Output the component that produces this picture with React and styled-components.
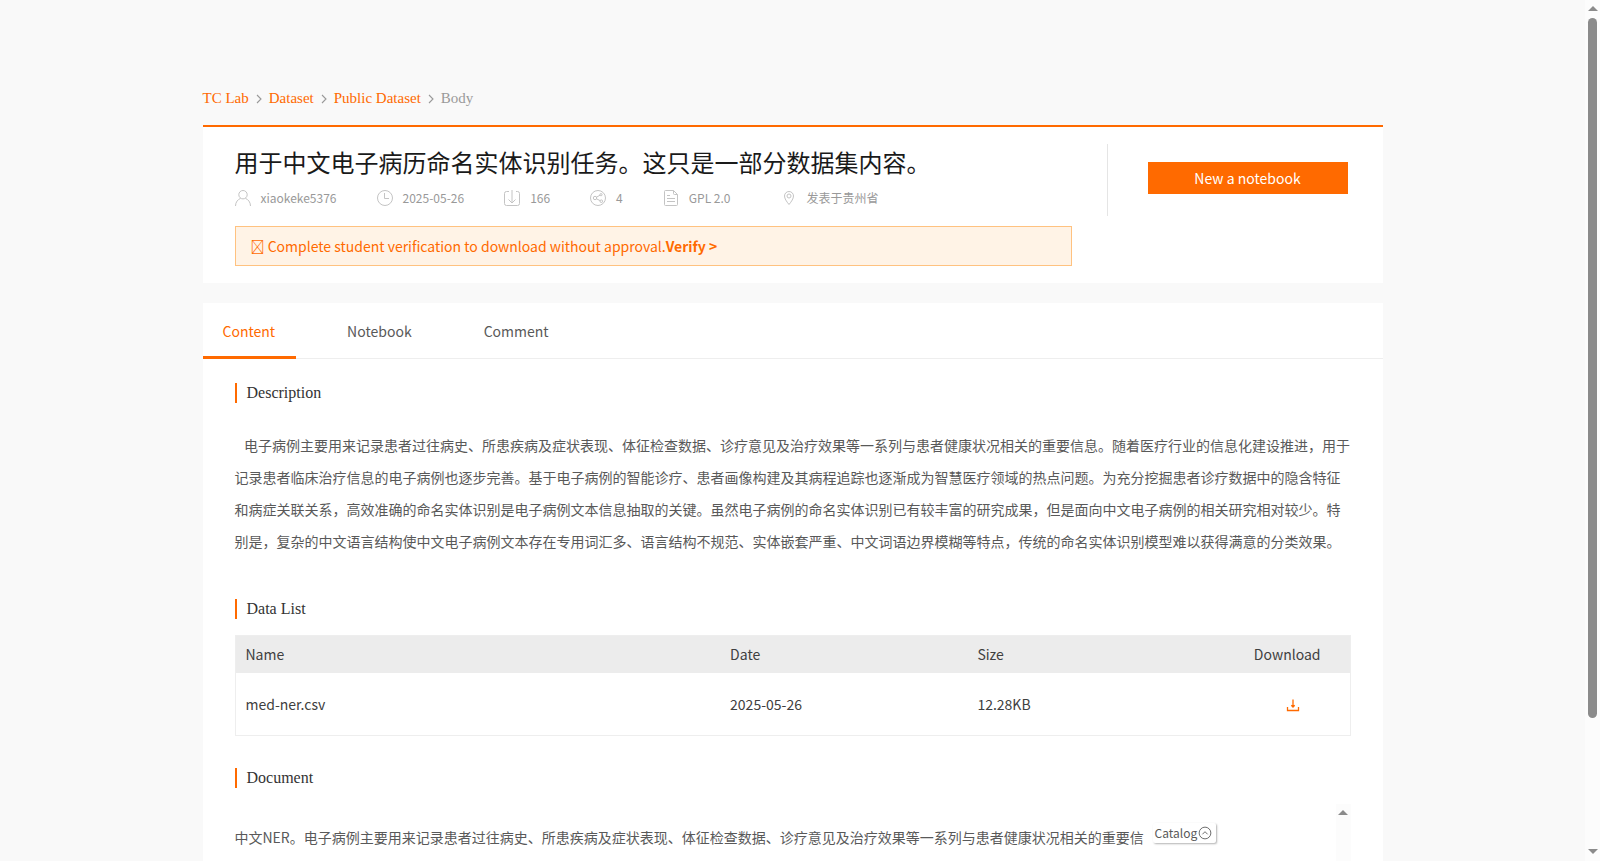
import React, { useState } from 'react';
import styled, { createGlobalStyle, css } from 'styled-components';

const GlobalStyle = createGlobalStyle`
    * {
        box-sizing: border-box;
    }
    body {
        margin: 0;
        background: #f9f9f9;
        color: #404040;
        font-family: "Noto Sans CJK SC", sans-serif;
        font-size: 14px;
    }
    button {
        font-family: inherit;
        cursor: pointer;
    }
    a {
        text-decoration: none;
    }
`

const Shell = styled.div`
    display: flex;
    height: 100vh;
    overflow: hidden;
`
const Page = styled.main`
    flex: 1;
    min-width: 0;
`
const Container = styled.div`
    max-width: 1180px;
    margin: 0 auto;
    padding-top: 84px;
`

const Rail = styled.div`
    display: flex;
    flex-direction: column;
    align-items: center;
    flex: none;
    width: 15px;
    padding: 6px 0 7px;
    background: #fcfcfc;
`
const Arrow = styled.span`
    border: 5px solid transparent;
    border-top-width: ${props => props.$down ? '5px' : '0'};
    border-bottom-width: ${props => props.$down ? '0' : '5px'};
    border-${props => props.$down ? 'top' : 'bottom'}-color: #8b8b8b;
`
const Track = styled.div`
    flex: 1;
    width: 9px;
    margin: 7px 0;
`
const Thumb = styled.div`
    height: 85%;
    border-radius: 5px;
    background: #8b8b8b;
`

const Breadcrumb = styled.nav`
    display: flex;
    align-items: center;
    height: 29px;
    margin-bottom: 12px;
    font-family: "Liberation Serif", serif;
    font-size: 15px;
    color: #999;

    a {
        color: #ff6a00;
    }
    svg {
        margin: 0 7px;
    }
`

const Card = styled.section`
    background: #fff;
`
const HeaderCard = styled(Card)`
    display: flex;
    align-items: flex-start;
    margin-bottom: 20px;
    padding: 17px 35px 17px 32px;
    border-top: 2px solid #ff6a00;
`
const Summary = styled.div`
    flex: 1;
    min-width: 0;
`
const Title = styled.h1`
    margin: 0;
    font-size: 24px;
    font-weight: 400;
    line-height: 36px;
    color: #1a1a1a;
`
const MetaList = styled.ul`
    display: flex;
    gap: 40px;
    margin: 9px 0 19px;
    padding: 0;
    list-style: none;
`
const MetaItem = styled.li`
    display: flex;
    align-items: center;
    gap: 10px;
    font-size: 12px;
    line-height: 18px;
    color: #999;
    margin-left: ${props => props.$spaced ? '10px' : '0'};

    svg {
        flex: none;
        color: #c4c4c4;
    }
`
const Notice = styled.div`
    height: 40px;
    padding: 0 15px;
    border: 1px solid #ffc280;
    background: #fff3e6;
    font-size: 14px;
    line-height: 38px;
    color: #ff6a00;

    a {
        color: inherit;
        font-weight: 700;
    }
`
const Actions = styled.div`
    height: 72px;
    margin-left: 35px;
    padding: 18px 0 0 40px;
    border-left: 1px solid #e5e5e5;
`
const PrimaryButton = styled.button`
    display: block;
    width: 200px;
    height: 32px;
    padding: 0;
    border: 0;
    background: #ff6a00;
    color: #fff;
    font-size: 14px;
`

const TabBar = styled.div`
    display: flex;
    gap: 31px;
    height: 56px;
    border-bottom: 1px solid #eee;
`
const Tab = styled.button`
    height: 56px;
    padding: 3px 21px 0 20px;
    border: 0;
    border-bottom: 3px solid transparent;
    background: none;
    color: #595959;
    font-size: 14px;
    ${props => props.$active && css`
        border-color: #ff6a00;
        color: #ff6a00;
    `}
`
const TabBody = styled.div`
    padding: 24px 32px;
`
const SectionTitle = styled.h2`
    margin: 0 0 16px;
    padding-left: 10px;
    border-left: 2px solid #ff6a00;
    font-family: "Liberation Serif", serif;
    font-size: 16px;
    font-weight: 400;
    line-height: 20px;
    color: #333;
`
const Description = styled.p`
    margin: 0;
    padding: 10px 0 42px;
    line-height: 32px;
    color: #595959;
    white-space: pre-wrap;
`

const FileTable = styled.table`
    width: 100%;
    margin-bottom: 32px;
    border: 1px solid #eee;
    border-spacing: 0;
    table-layout: fixed;
    font-size: 14px;

    th, td {
        padding: 0 10px;
        text-align: left;
        font-weight: 400;
    }
    th {
        height: 37px;
        padding-bottom: 2px;
        background: #ececec;
    }
    td {
        height: 62px;
    }
    th:last-child {
        padding: 0 29px 2px;
        text-align: right;
    }
    td:last-child {
        padding: 0 50px 2px;
        text-align: right;
    }
`
const Col = styled.col`
    width: ${props => props.$width};
`
const IconButton = styled.button`
    padding: 0;
    border: 0;
    background: none;
    color: #ff6a00;
    line-height: 0;
    vertical-align: middle;
`

const DocumentArea = styled.div`
    display: flex;
    height: 600px;
    overflow: hidden;
`
const DocumentText = styled.p`
    width: 914px;
    margin: 0;
    padding-top: 17px;
    line-height: 32px;
    color: #595959;
`
const DocumentSide = styled.div`
    flex: 1;
    padding: 19px 0 0 4px;
`
const CatalogButton = styled.button`
    display: flex;
    align-items: center;
    gap: 1px;
    height: 20px;
    padding: 0 4px 1px 2px;
    border: 0;
    border-radius: 2px;
    background: #fff;
    box-shadow: 1px 1px 2px rgba(0, 0, 0, 0.3);
    color: #595959;
    font-size: 12px;
`

const Icon = ({ size = 16, children }) => (
    <svg width={size} height={size} viewBox='0 0 16 16' fill='none' stroke='currentColor' aria-hidden='true'>
        {children}
    </svg>
)

const Chevron = () => (
    <svg width='6' height='10' viewBox='0 0 6 10' fill='none' stroke='#999' strokeWidth='1.1' aria-hidden='true'>
        <path d='M1 1l4 4-4 4' />
    </svg>
)

const metaData = [
    { text: 'xiaokeke5376', icon: <><circle cx='8' cy='4.7' r='4.2' /><path d='M.5 16c0-4 2.5-6.6 5-7.6M15.5 16c0-4-2.5-6.6-5-7.6' /></> },
    { text: '2025-05-26', icon: <><circle cx='8' cy='8' r='7.5' /><path d='M7.5 3v5.5H12' /></> },
    { text: '166', icon: <><path d='M5 1.5H2.5a2 2 0 0 0-2 2V13.5a2 2 0 0 0 2 2h11a2 2 0 0 0 2-2V3.5a2 2 0 0 0-2-2H12M8 0v12.5M4.5 9.5L8 13l3.5-3.5' /></> },
    { text: '4', icon: <><circle cx='8' cy='8' r='7.5' /><circle cx='5' cy='8' r='1.7' /><circle cx='11' cy='4.7' r='1.1' /><circle cx='11.3' cy='11.2' r='1.3' /><path d='M6.5 7.2l3.5-2M6.5 8.8l3.7 1.9' /></> },
    { text: 'GPL 2.0', icon: <><path d='M10.5.5h-8a1 1 0 0 0-1 1v13a1 1 0 0 0 1 1h11a1 1 0 0 0 1-1v-10zM10.5.5v3a1 1 0 0 0 1 1h3M4 5.5h3M4 8.5h8M4 11.5h8' /></> },
    { text: '发表于贵州省', spaced: true, icon: <><path d='M8 14.5C5.5 11.5 3.5 8.5 3.5 6a4.5 4.5 0 0 1 9 0c0 2.5-2 5.5-4.5 8.5z' /><circle cx='8' cy='6' r='2' /></> },
]

const tabs = ['Content', 'Notebook', 'Comment']

const intro = '电子病例主要用来记录患者过往病史、所患疾病及症状表现、体征检查数据、诊疗意见及治疗效果等一系列与患者健康状况相关的重要信息。随着医疗行业的信息化建设推进，用于记录患者临床治疗信息的电子病例也逐步完善。基于电子病例的智能诊疗、患者画像构建及其病程追踪也逐渐成为智慧医疗领域的热点问题。为充分挖掘患者诊疗数据中的隐含特征和病症关联关系，高效准确的命名实体识别是电子病例文本信息抽取的关键。虽然电子病例的命名实体识别已有较丰富的研究成果，但是面向中文电子病例的相关研究相对较少。特别是，复杂的中文语言结构使中文电子病例文本存在专用词汇多、语言结构不规范、实体嵌套严重、中文词语边界模糊等特点，传统的命名实体识别模型难以获得满意的分类效果。'

const documentIntro = '中文NER。电子病例主要用来记录患者过往病史、所患疾病及症状表现、体征检查数据、诊疗意见及治疗效果等一系列与患者健康状况相关的重要信'

const files = [
    { name: 'med-ner.csv', date: '2025-05-26', size: '12.28KB' },
]

const App = () => {
    const [activeTab, setActiveTab] = useState('Content')

    return (
        <Shell>
            <GlobalStyle />
            <Page>
                <Container>
                    <Breadcrumb>
                        <a href='#lab'>TC Lab</a>
                        <Chevron />
                        <a href='#dataset'>Dataset</a>
                        <Chevron />
                        <a href='#public'>Public Dataset</a>
                        <Chevron />
                        <span>Body</span>
                    </Breadcrumb>

                    <HeaderCard>
                        <Summary>
                            <Title>用于中文电子病历命名实体识别任务。这只是一部分数据集内容。</Title>
                            <MetaList>
                                {metaData.map(item => (
                                    <MetaItem key={item.text} $spaced={item.spaced}>
                                        <Icon>{item.icon}</Icon>
                                        {item.text}
                                    </MetaItem>
                                ))}
                            </MetaList>
                            <Notice>
                                {'\ue69b Complete student verification to download without approval.'}
                                <a href='#verify'>Verify &gt;</a>
                            </Notice>
                        </Summary>
                        <Actions>
                            <PrimaryButton>New a notebook</PrimaryButton>
                        </Actions>
                    </HeaderCard>

                    <Card>
                        <TabBar role='tablist'>
                            {tabs.map(tab => (
                                <Tab
                                    key={tab}
                                    role='tab'
                                    aria-selected={tab === activeTab}
                                    $active={tab === activeTab}
                                    onClick={() => setActiveTab(tab)}
                                >
                                    {tab}
                                </Tab>
                            ))}
                        </TabBar>
                        <TabBody>
                            <SectionTitle>Description</SectionTitle>
                            <Description>{'   ' + intro}</Description>

                            <SectionTitle>Data List</SectionTitle>
                            <FileTable>
                                <colgroup>
                                    <Col $width='43.5%' />
                                    <Col $width='22.2%' />
                                    <Col />
                                    <Col $width='12%' />
                                </colgroup>
                                <thead>
                                    <tr>
                                        <th>Name</th>
                                        <th>Date</th>
                                        <th>Size</th>
                                        <th>Download</th>
                                    </tr>
                                </thead>
                                <tbody>
                                    {files.map(file => (
                                        <tr key={file.name}>
                                            <td>{file.name}</td>
                                            <td>{file.date}</td>
                                            <td>{file.size}</td>
                                            <td>
                                                <IconButton aria-label={'Download ' + file.name}>
                                                    <svg width='14' height='14' viewBox='0 0 14 14' fill='none' stroke='currentColor' strokeWidth='1.3' aria-hidden='true'>
                                                        <path d='M1.5 9v3.5h11V9M7 1.5v7M5.3 7.3L7 9l1.7-1.7' />
                                                    </svg>
                                                </IconButton>
                                            </td>
                                        </tr>
                                    ))}
                                </tbody>
                            </FileTable>

                            <SectionTitle>Document</SectionTitle>
                            <DocumentArea>
                                <DocumentText>{documentIntro}</DocumentText>
                                <DocumentSide>
                                    <CatalogButton>
                                        Catalog
                                        <Icon size={14}>
                                            <circle cx='8' cy='8' r='6.7' />
                                            <path d='M5 9.5l3-3 3 3' />
                                        </Icon>
                                    </CatalogButton>
                                </DocumentSide>
                                <Rail>
                                    <Arrow />
                                </Rail>
                            </DocumentArea>
                        </TabBody>
                    </Card>
                </Container>
            </Page>
            <Rail>
                <Arrow />
                <Track>
                    <Thumb />
                </Track>
                <Arrow $down />
            </Rail>
        </Shell>
    );
}

export default App;
